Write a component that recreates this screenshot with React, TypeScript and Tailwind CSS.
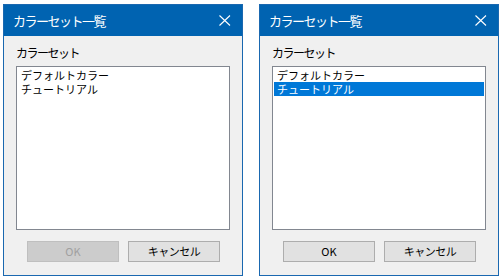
import React from "react";

const font = { fontFamily: '"Noto Sans CJK JP", "Noto Sans", sans-serif' };

function CloseIcon() {
    return (
        <svg width="12" height="11" viewBox="0 0 12 11" className="block">
            <path d="M0.5 0.5 L11 10.5 M11 0.5 L0.5 10.5" stroke="#ffffff" strokeWidth="1.1" fill="none" />
        </svg>
    );
}

function ColorSetDialog({ selected }: { selected: number | null }) {
    const items = ["デフォルトカラー", "チュートリアル"];
    return (
        <div className="flex h-[272px] w-[240px] flex-col border border-[#1a68b0] bg-[#f0f0f0]">
            {/* title bar */}
            <div className="flex h-[31px] items-center justify-between bg-[#0063b1] pl-[9px] pr-[11px]">
                <span className="text-[13px] leading-none tracking-[-1.5px] text-white">カラーセット一覧</span>
                <CloseIcon />
            </div>

            <div className="flex flex-1 flex-col px-[12px] pt-[9px]">
                <p className="text-[12px] leading-[16px] tracking-[-1.5px] text-black">カラーセット</p>
                <div className="mt-[5px] h-[164px] border border-[#828790] bg-white px-px pt-px">
                    {items.map((item, i) => (
                        <div
                            key={item}
                            className={
                                i === selected
                                    ? "h-[14px] bg-[#0078d7] pl-[3px] text-[11px] leading-[14px] text-white"
                                    : "h-[14px] pl-[3px] text-[11px] leading-[14px] text-black"
                            }
                        >
                            {item}
                        </div>
                    ))}
                </div>

                <div className="mt-[11px] flex justify-center gap-[9px] pl-[1px]">
                    <button
                        disabled={selected === null}
                        className={
                            selected === null
                                ? "h-[21px] w-[92px] border border-[#bfbfbf] bg-[#cccccc] text-[11px] leading-none text-[#a0a0a0]"
                                : "h-[21px] w-[92px] border border-[#adadad] bg-[#e1e1e1] text-[11px] leading-none text-black"
                        }
                        style={font}
                    >
                        OK
                    </button>
                    <button
                        className="h-[21px] w-[92px] border border-[#adadad] bg-[#e1e1e1] text-[11px] leading-none tracking-[-0.5px] text-black"
                        style={font}
                    >
                        キャンセル
                    </button>
                </div>
            </div>
        </div>
    );
}

export default function App() {
    return (
        <div className="flex h-[278px] w-[501px] gap-[16px] bg-white pl-[3px] pt-[4px]" style={font}>
            <ColorSetDialog selected={null} />
            <ColorSetDialog selected={1} />
        </div>
    );
}
